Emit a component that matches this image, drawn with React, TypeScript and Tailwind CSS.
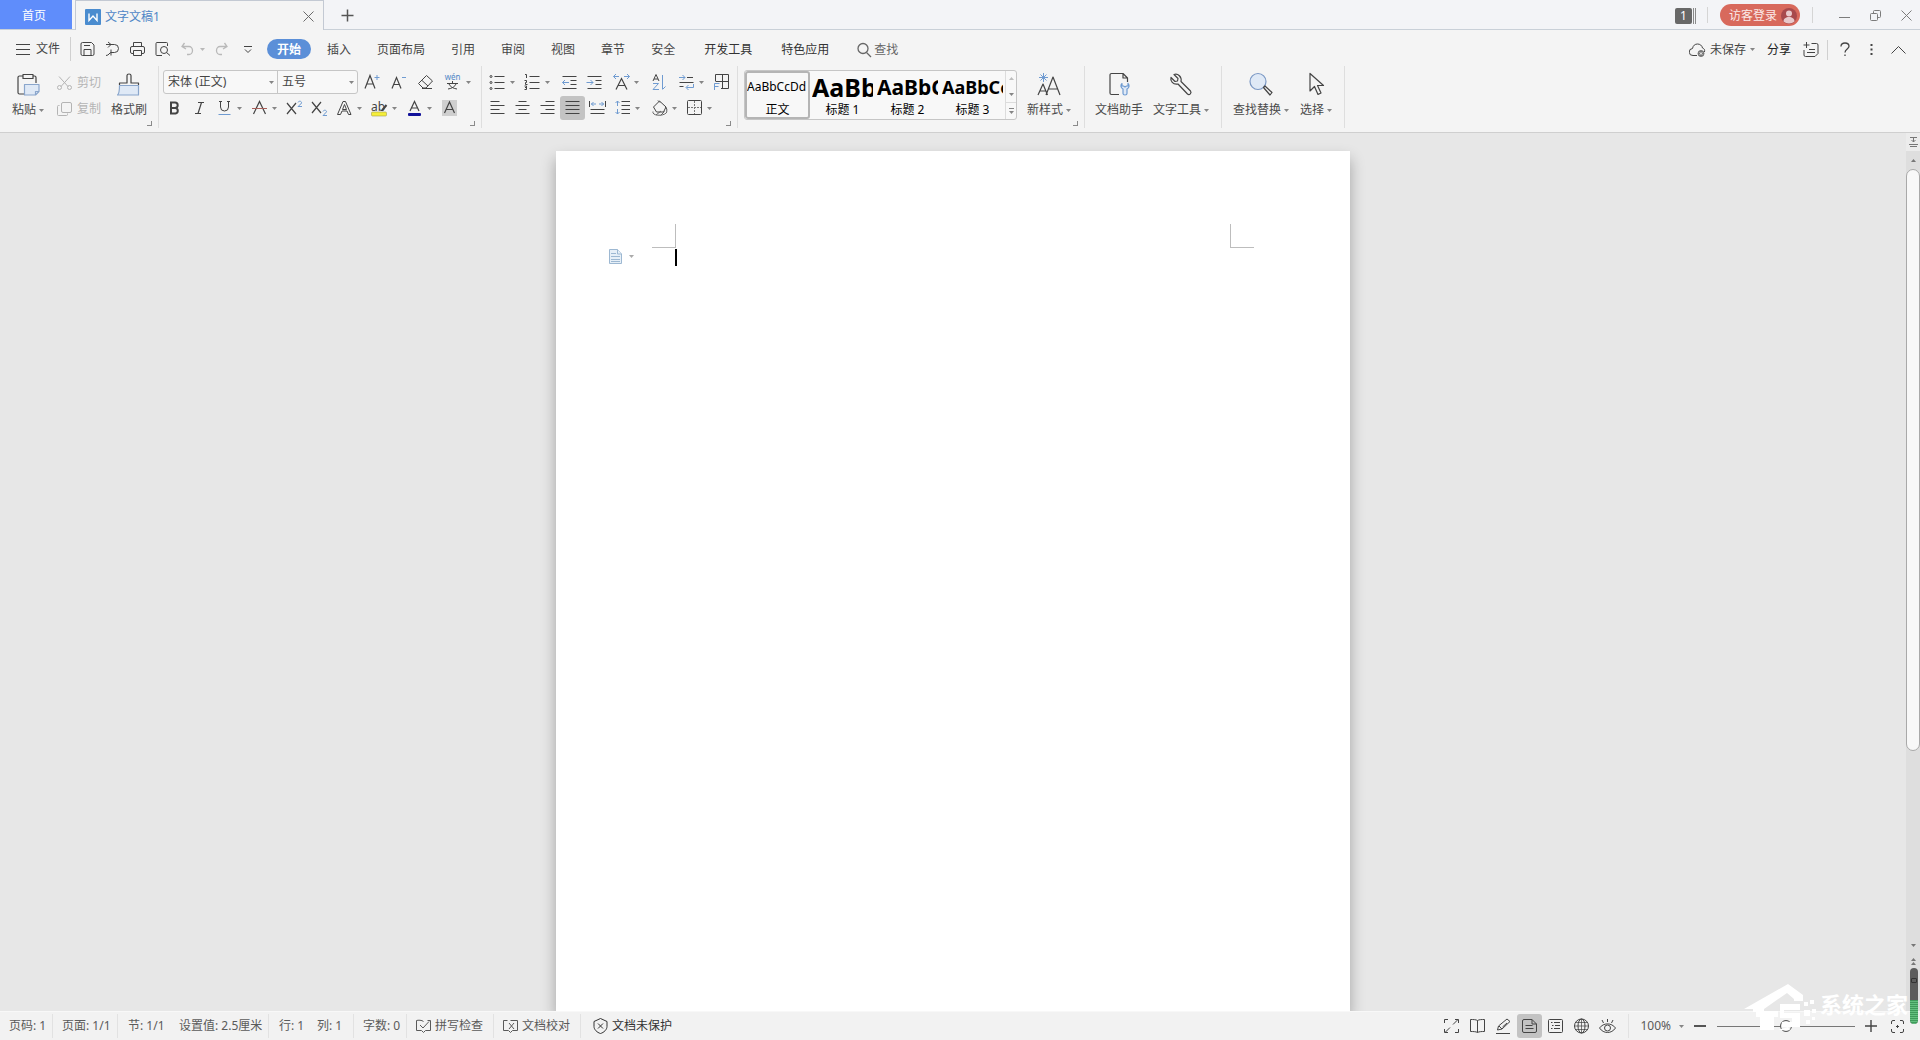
import React from 'react';
import clsx from 'clsx';

const BLUE = '#6f9bd1';

/** Small drop-down triangle */
const Caret: React.FC<{ className?: string }> = ({ className }) => (
  <svg width="5" height="3" viewBox="0 0 5 3" className={clsx('shrink-0', className ?? 'text-[#858585]')}>
    <path d="M0 0h5L2.500 3z" fill="currentColor" />
  </svg>
);

/** 17x16 line icon */
const Glyph: React.FC<{ children: React.ReactNode }> = ({ children }) => (
  <svg
    width="17"
    height="16"
    viewBox="0 0 17 16"
    fill="none"
    stroke="currentColor"
    strokeWidth="1"
    className="shrink-0 overflow-visible"
  >
    {children}
  </svg>
);

/** 24x24 line icon */
const LargeGlyph: React.FC<{ children: React.ReactNode }> = ({ children }) => (
  <svg width="24" height="24" viewBox="0 0 24 24" fill="none" stroke="#444" strokeWidth="1.2" strokeLinejoin="round">
    {children}
  </svg>
);

interface ToolButtonProps {
  label: string;
  children: React.ReactNode;
  caret?: boolean;
  active?: boolean;
  wide?: boolean;
  muted?: boolean;
}

const ToolButton: React.FC<ToolButtonProps> = ({ label, children, caret, active, wide, muted }) => (
  <button
    type="button"
    aria-label={label}
    title={label}
    className={clsx(
      'flex h-6 shrink-0 items-center',
      caret && 'pr-[5px]',
      active && 'rounded-[3px] bg-[#c3c3c3]',
      muted ? 'text-[#b9b9b9]' : 'text-[#444]'
    )}
  >
    <span className={clsx('flex justify-center', wide ? 'w-[27px]' : 'w-[25px]')}>
      <Glyph>{children}</Glyph>
    </span>
    {caret && <Caret className={muted ? 'text-[#b9b9b9]' : undefined} />}
  </button>
);

const LargeButton: React.FC<{ label: string; caret?: boolean; children: React.ReactNode }> = ({
  label,
  caret,
  children,
}) => (
  <button type="button" className="flex flex-col items-center pt-[2px] text-[#4a4a4a]">
    <LargeGlyph>{children}</LargeGlyph>
    <span className="mt-[6px] flex h-4 items-center gap-[3px] whitespace-nowrap leading-4">
      {label}
      {caret && <Caret />}
    </span>
  </button>
);

/** Ribbon group with its dialog launcher in the corner */
const Group: React.FC<{ className?: string; launcher?: boolean; children: React.ReactNode }> = ({
  className,
  launcher,
  children,
}) => (
  <section className={clsx('relative flex h-[62px] shrink-0 border-r border-[#dedede] pt-1', className)}>
    {children}
    {launcher && (
      <button
        type="button"
        aria-label="更多设置"
        className="absolute right-[6px] bottom-[2px] h-[5px] w-[5px] border-r border-b border-[#8a8a8a]"
      />
    )}
  </section>
);

const TitleBar: React.FC = () => (
  <header className="flex h-[30px] items-stretch border-b border-[#c9d0d8] bg-[#f3f4f7]">
    <button type="button" className="w-[72px] shrink-0 bg-[#5f8dfb] pt-[2px] pr-1 text-white">
      首页
    </button>
    <div className="ml-[3px] -mb-px flex w-[249px] items-center border border-b-0 border-[#c3c9d3] bg-[#f4f4f4] pt-[2px] pr-[9px] pl-[9px]">
      <svg width="16" height="16" viewBox="0 0 16 16">
        <rect width="16" height="16" rx="1" fill="#4a8ccf" />
        <path d="M4 4.500v7l4-4.500 4 4.500v-7" fill="none" stroke="#fff" strokeWidth="1.400" />
      </svg>
      <span className="ml-1 flex-1 text-[#4f86c6]">文字文稿1</span>
      <button type="button" aria-label="关闭标签" className="text-[#6b6b6b]">
        <svg width="11" height="11" viewBox="0 0 11 11" stroke="currentColor">
          <path d="M.5.5l10 10M10.500.5l-10 10" />
        </svg>
      </button>
    </div>
    <button type="button" aria-label="新建" className="ml-[17px] pt-[2px] text-[#555]">
      <svg width="13" height="13" viewBox="0 0 13 13" stroke="currentColor" strokeWidth="1.500">
        <path d="M6.500.5v12M.5 6.500h12" />
      </svg>
    </button>
    <div className="ml-auto flex items-center pt-px pr-2">
      <span className="flex items-center gap-px pt-px">
        <span className="h-4 w-[17px] rounded-[2px] bg-[#686868] text-center leading-4 text-white">1</span>
        <span className="h-4 w-[3px] border-x border-[#8a8a8a]" />
      </span>
      <span className="ml-[11px] h-4 w-px bg-[#d5d5d5]" />
      <button
        type="button"
        className="ml-3 flex h-[22px] w-20 items-center justify-between rounded-full bg-[#d8695c] pt-px pr-[3px] pl-[9px] text-[#fbeae8]"
      >
        访客登录
        <svg width="16" height="16" viewBox="0 0 16 16">
          <circle cx="8" cy="8" r="8" fill="#a8494c" />
          <circle cx="8" cy="5.500" r="3" fill="#e9c9cb" />
          <path d="M2.500 13.500c0-3 2.500-4.500 5.500-4.500s5.500 1.500 5.500 4.500c-3 2.500-8 2.500-11 0z" fill="#e9c9cb" />
        </svg>
      </button>
      <span className="ml-3 h-4 w-px bg-[#d5d5d5]" />
      <div className="ml-[26px] flex items-center gap-5 text-[#7c7c7c]">
        <button type="button" aria-label="最小化">
          <svg width="11" height="11" viewBox="0 0 11 11" fill="none" stroke="currentColor">
            <path d="M0 7.500h11" />
          </svg>
        </button>
        <button type="button" aria-label="还原">
          <svg width="11" height="11" viewBox="0 0 11 11" fill="none" stroke="currentColor">
            <rect x=".5" y="3.500" width="7" height="7" rx="1" />
            <path d="M3.500 3.500V1.500a1 1 0 011-1h5a1 1 0 011 1v5a1 1 0 01-1 1h-2" />
          </svg>
        </button>
        <button type="button" aria-label="关闭">
          <svg width="11" height="11" viewBox="0 0 11 11" stroke="currentColor">
            <path d="M.5.5l10 10M10.500.5l-10 10" />
          </svg>
        </button>
      </div>
    </div>
  </header>
);

const tabs = ['插入', '页面布局', '引用', '审阅', '视图', '章节', '安全'];
const extraTabs = ['开发工具', '特色应用'];

const MenuBar: React.FC = () => (
  <div className="flex h-[36px] items-center pt-[2px] text-[#444]">
    <button type="button" className="ml-4 flex items-center gap-[6px]">
      <svg width="14" height="11" viewBox="0 0 14 11" stroke="currentColor">
        <path d="M0 .5h14M0 5.500h14M0 10.500h14" />
      </svg>
      文件
    </button>
    <span className="ml-[10px] h-6 w-px bg-[#d0d0d0]" />
    <div className="ml-1 flex">
      <ToolButton label="保存">
        <path d="M3.500 1.500h9l2.500 2.500v9a1.500 1.500 0 01-1.500 1.500h-10A1.500 1.500 0 012 13V3a1.500 1.500 0 011.500-1.500zM5 14.500V8.500h7v6M5 4.500h6" />
      </ToolButton>
      <ToolButton label="输出">
        <path d="M2 3.500h8.500a4 4 0 010 8H7M7 8.500v6M4 1l3 2.500L4 6.500M7 11.500c-1.500 0-2 3-5 3" />
      </ToolButton>
      <ToolButton label="打印">
        <path d="M4.500 5.500v-4h8v4M4.500 12.500H3A1.500 1.500 0 011.500 11V7A1.500 1.500 0 013 5.500h11A1.500 1.500 0 0115.500 7v4a1.500 1.500 0 01-1.500 1.500h-1.500M4.500 9.500h8v5h-8z" />
      </ToolButton>
      <ToolButton label="打印预览">
        <path d="M8 14.500H3a1 1 0 01-1-1v-11a1 1 0 011-1h9.500a1 1 0 011 1V5" />
        <circle cx="10" cy="9" r="3.500" />
        <path d="M12.500 11.500l3.500 3" />
      </ToolButton>
      <ToolButton label="撤销" caret muted>
        <path d="M5.500 2L3 5.500l4 2.500M3 5.500h7a3.500 4 0 010 8H8" strokeWidth="1.300" />
      </ToolButton>
      <ToolButton label="恢复" muted>
        <path d="M10.500 2l2.500 3.500-4 2.500M13 5.500H6a3.500 4 0 000 8h2" strokeWidth="1.300" />
      </ToolButton>
      <ToolButton label="自定义快速访问工具栏">
        <path d="M5 5.500h8M6 8.500l3 3 3-3" />
      </ToolButton>
    </div>
    <nav className="flex items-center">
      <button
        type="button"
        className="mr-[3px] ml-[7px] h-5 rounded-full bg-[#5b8fd8] px-[10px] pt-px font-bold text-white"
      >
        开始
      </button>
      {tabs.map((tab) => (
        <button key={tab} type="button" className="px-[13px] pt-[2px]">
          {tab}
        </button>
      ))}
      {extraTabs.map((tab) => (
        <button key={tab} type="button" className="ml-[3px] px-[13px] pt-[2px] text-[#333]">
          {tab}
        </button>
      ))}
    </nav>
    <button type="button" className="ml-[15px] flex items-center gap-[2px] pt-px text-[#666]">
      <svg width="15" height="16" viewBox="0 0 15 16" fill="none" stroke="currentColor" strokeWidth="1.300">
        <circle cx="6" cy="6.500" r="5" />
        <path d="M9.500 10.500l4.500 4.500" />
      </svg>
      查找
    </button>
    <div className="ml-auto flex items-center pt-px pr-[14px]">
      <button type="button" className="flex items-center gap-1 whitespace-nowrap">
        <svg width="17" height="16" viewBox="0 0 17 16" fill="none" stroke="currentColor">
          <path d="M8 13.500H4a3.500 3.500 0 01-.5-7C4 3.500 6 2 8.500 2s4.500 1.500 5 4c1.500.5 2.500 1.500 2 4" />
          <circle cx="12" cy="11.500" r="3" fill="#777" stroke="#777" />
          <path d="M10.800 10.300l2.400 2.400M13.200 10.300l-2.400 2.400" stroke="#fff" />
        </svg>
        未保存
        <Caret />
      </button>
      <button type="button" className="ml-3 text-[#222]">
        分享
      </button>
      <button type="button" aria-label="批注" className="ml-3">
        <Glyph>
          <path d="M3.500 0v6M.5 3h6M8.500 1.500h5A1.500 1.500 0 0115 3v8.500l-3 3H2.500A1.500 1.500 0 011 13V8M6 7.500h6M4 10.500h8" />
        </Glyph>
      </button>
      <span className="ml-[7px] h-5 w-px bg-[#d0d0d0]" />
      <button type="button" aria-label="帮助" className="ml-3">
        <svg width="10" height="15" viewBox="0 0 10 15" fill="none" stroke="currentColor" strokeWidth="1.300">
          <path d="M1 4.500C1 2 2.500 1 5 1s4 1.200 4 3.300C9 7 5 7 5 10.500M5 12.500V14" />
        </svg>
      </button>
      <button type="button" aria-label="更多" className="ml-5">
        <svg width="3" height="13" viewBox="0 0 3 13" fill="currentColor">
          <path d="M.5 1h2v2h-2zM.5 5.500h2v2h-2zM.5 10h2v2h-2z" />
        </svg>
      </button>
      <button type="button" aria-label="折叠功能区" className="ml-[18px]">
        <svg width="15" height="8" viewBox="0 0 15 8" fill="none" stroke="currentColor">
          <path d="M.5 7.500l7-7 7 7" />
        </svg>
      </button>
    </div>
  </div>
);

const SelectBox: React.FC<{ label: string; value: string; className: string }> = ({ label, value, className }) => (
  <label className={clsx('relative flex items-center', className)}>
    <span className="sr-only">{label}</span>
    <select
      className="h-full w-full appearance-none bg-transparent pl-1 leading-5 text-[#444] outline-none"
      defaultValue={value}
    >
      <option>{value}</option>
    </select>
    <Caret className="pointer-events-none absolute right-[3px] text-[#858585]" />
  </label>
);

const FontGroup: React.FC = () => (
  <Group className="w-[323px] flex-col gap-[2px] pl-1" launcher>
    <div className="flex">
      <div className="flex h-6 w-[195px] rounded-[3px] border border-[#c6c6c6] bg-[#f8f8f8]">
        <SelectBox label="字体" value="宋体 (正文)" className="w-[114px] border-r border-[#c6c6c6]" />
        <SelectBox label="字号" value="五号" className="flex-1" />
      </div>
      <ToolButton label="增大字号" wide>
        <path d="M2 14.500l5-13 5 13M4 10h6.500" strokeWidth="1.200" />
        <path d="M14 1v5M11.500 3.500h5" stroke={BLUE} />
      </ToolButton>
      <ToolButton label="减小字号" wide>
        <path d="M2 14.500l4.500-11 4.500 11M4 10.500h5.500" strokeWidth="1.200" />
        <path d="M12 3.500h4" stroke={BLUE} />
      </ToolButton>
      <ToolButton label="清除格式" wide>
        <path d="M9.500 1.500l6 5.500-6.500 7H6L1.500 9.500zM5 6.500l6 5.500M5 14.500h10" />
      </ToolButton>
      <ToolButton label="拼音指南" wide caret>
        <text x="8.500" y="6" fontSize="8" textAnchor="middle" fill="#4f86c6" stroke="none">
          wén
        </text>
        <path d="M8.500 7v2M3 9.500h11M5 10c1 2.500 4 4.500 8 5M12 10c-1 2.500-4 4.500-8 5" />
      </ToolButton>
    </div>
    <div className="-ml-px flex">
      <ToolButton label="加粗">
        <path d="M5 2.500h4a2.700 2.700 0 010 5.400H5zM5 8h4.500a2.800 2.800 0 010 5.500H5z" strokeWidth="2" />
      </ToolButton>
      <ToolButton label="倾斜">
        <path d="M7 2.500h6M4 13.500h6M10.500 2.500l-3.500 11" strokeWidth="1.200" />
      </ToolButton>
      <ToolButton label="下划线" caret>
        <path d="M4.500 1v6a4 4 0 008 0V1M3 1.500h3M11 1.500h3" />
        <path d="M2.500 14.500h12" stroke={BLUE} />
      </ToolButton>
      <ToolButton label="删除线" caret>
        <path d="M2.500 14l6-12.500 6 12.500" strokeWidth="1.200" />
        <path d="M1 8.500h15" stroke="#a8615c" />
      </ToolButton>
      <ToolButton label="上标">
        <path d="M1 3l9 11M10 3L1 14" strokeWidth="1.200" />
        <path d="M12 2.500c.5-2 4-1.500 3.500.5C15 4.500 13 5 12 6.500h4" stroke={BLUE} />
      </ToolButton>
      <ToolButton label="下标">
        <path d="M1 2l9 11M10 2L1 13" strokeWidth="1.200" />
        <path d="M12 11.500c.5-2 4-1.500 3.500.5-.5 1-2.500 2-3.500 3.500h4" stroke={BLUE} />
      </ToolButton>
      <ToolButton label="文字效果" caret>
        <path d="M1.500 14.500l5.500-13h2.500l5.500 13h-2.500L11 11H6l-1.500 3.500zM6.500 9.500h4L8.500 4.500z" />
      </ToolButton>
      <ToolButton label="突出显示" caret>
        <text x="0" y="11" fontSize="12" fill="#444" stroke="none">
          ab
        </text>
        <path d="M15.500 5L11 10.500" strokeWidth="2" />
        <rect x=".5" y="12" width="15" height="4" rx="1" fill="#f5ee3a" stroke="#a5a04a" strokeWidth=".6" />
      </ToolButton>
      <ToolButton label="字体颜色" caret>
        <path d="M4 11l4.500-9.500L13 11M5.500 8h6" strokeWidth="1.200" />
        <rect x="2" y="13" width="13" height="3" rx="1" fill="#11119a" stroke="none" />
      </ToolButton>
      <ToolButton label="字符底纹">
        <rect x="1" y="0" width="15" height="16" fill="#cfcfcf" stroke="none" />
        <path d="M3.500 13l5-11 5 11M5.500 9.500h6" strokeWidth="1.200" />
      </ToolButton>
    </div>
  </Group>
);

const ParagraphGroup: React.FC = () => (
  <Group className="w-[256px] flex-col gap-[2px] pl-[3px]" launcher>
    <div className="flex">
      <ToolButton label="项目符号" caret>
        <path d="M5.500 2.500h10M5.500 8.500h10M5.500 14.500h10" />
        <circle cx="2" cy="2.500" r="1" />
        <circle cx="2" cy="8.500" r="1" />
        <circle cx="2" cy="14.500" r="1" />
      </ToolButton>
      <ToolButton label="编号" caret>
        <path d="M5.500 2.500h10M5.500 8.500h10M5.500 14.500h10M1 .5h1.500v3.500M.5 6.500h2v2h-1v2h2M.5 12h2v3.500h-2M1 13.500h1.500" />
      </ToolButton>
      <span className="w-[2px]" />
      <ToolButton label="减少缩进量">
        <path d="M1.500 2.500h14M9.500 6.500h6M9.500 10.500h6M1.500 14.500h14" />
        <path d="M8 8.500H1.500M4 6L1.500 8.500 4 11" stroke={BLUE} />
      </ToolButton>
      <ToolButton label="增加缩进量">
        <path d="M1.500 2.500h14M9.500 6.500h6M9.500 10.500h6M1.500 14.500h14" />
        <path d="M.5 8.500H7M4.500 6L7 8.500 4.500 11" stroke={BLUE} />
      </ToolButton>
      <span className="w-[2px]" />
      <ToolButton label="中文版式" caret>
        <path d="M3 15.500l5.500-11 5.500 11M5 11.500h7" strokeWidth="1.200" />
        <path d="M6 2.500H.5M3 0L.5 2.500 3 5M11 2.500h5.500M14 0l2.500 2.500L14 5" stroke={BLUE} />
      </ToolButton>
      <span className="w-[2px]" />
      <ToolButton label="排序">
        <path d="M3 7l3-6.500L9 7M4 5h4" />
        <path d="M3 9.500h5.500L3 15.500h6M12.500 1v14M12.500 15.500l3-3" stroke={BLUE} />
      </ToolButton>
      <span className="w-[3px]" />
      <ToolButton label="制表位" caret>
        <path d="M9 3.500h6M1.500 8.500h14M1.500 12.500h4" />
        <path d="M1 3.500h6M4.500 1L7 3.500 4.500 6M15.500 10v3.500H8.500M10.500 11L8 13.500l2.500 2.500" stroke={BLUE} />
      </ToolButton>
      <ToolButton label="插入表格">
        <path d="M2.500 7V.5h13v14H8M2.500 7.500h13M9.500.5v14" />
        <path d="M1.500 16V9.500h5M1.500 12.500h4" stroke={BLUE} />
      </ToolButton>
    </div>
    <div className="flex">
      <ToolButton label="左对齐">
        <path d="M1.500 1.500h9M1.500 5.500h14M1.500 9.500h9M1.500 13.500h14" />
      </ToolButton>
      <ToolButton label="居中对齐">
        <path d="M4.500 1.500h8M1.500 5.500h14M4.500 9.500h8M1.500 13.500h14" />
      </ToolButton>
      <ToolButton label="右对齐">
        <path d="M6.500 1.500h9M1.500 5.500h14M6.500 9.500h9M1.500 13.500h14" />
      </ToolButton>
      <ToolButton label="两端对齐" active>
        <path d="M1.500 1.500h14M1.500 5.500h14M1.500 9.500h14M1.500 13.500h14" />
      </ToolButton>
      <ToolButton label="分散对齐">
        <path d="M.5 1v6M16.500 1v6M1.500 9.500h14M1.500 13.500h14" />
        <path d="M7 4H2M4.500 2L2.500 4l2 2M10 4h5M12.500 2l2 2-2 2" stroke={BLUE} />
      </ToolButton>
      <ToolButton label="行距" caret>
        <path d="M7.500 1.500h8.500M7.500 5.500h8.500M7.500 9.500h8.500M7.500 13.500h8.500" />
        <path d="M3.500 1v5M1.500 3l2-2 2 2M3.500 9v5M1.500 12l2 2 2-2" stroke={BLUE} />
      </ToolButton>
      <span className="w-[2px]" />
      <ToolButton label="底纹颜色" caret>
        <path d="M2.500 7L8.500 1 15 7l-2.500 5h-7zM7 .5l2 2M14.500 7c1.500 1.500 1.500 3 1 4.500" />
        <path d="M2 11.500c-1.500 5 13 5 14 0M5 15l5-4M9.500 15.500l4-4" stroke="#666" />
      </ToolButton>
      <ToolButton label="边框" caret>
        <rect x="1.500" y=".5" width="14" height="14" rx="1" />
        <path d="M8.500 1v13M2 7.500h13" strokeDasharray="2 1" stroke="#777" />
      </ToolButton>
    </div>
  </Group>
);

const styles = [
  { name: '正文', sample: 'AaBbCcDd', className: 'text-xs/7' },
  { name: '标题 1', sample: 'AaBb', className: 'text-[25px]/7 font-bold' },
  { name: '标题 2', sample: 'AaBbC', className: 'text-[21px]/7 font-bold' },
  { name: '标题 3', sample: 'AaBbCc', className: 'text-lg/7 font-bold' },
];

const StyleGroup: React.FC = () => (
  <Group className="w-[347px] pl-[6px]" launcher>
    <div className="flex h-[50px] w-[273px] overflow-hidden rounded-[3px] border border-[#c6c6c6] bg-[#f8f8f8]">
      {styles.map((style, index) => (
        <button
          key={style.name}
          type="button"
          className={clsx(
            'flex w-[65px] shrink-0 flex-col items-stretch px-[2px] pt-[2px] text-left text-black',
            index === 0 && 'rounded-[3px] outline-2 -outline-offset-2 outline-[#b5b5b5]'
          )}
        >
          <span className={clsx('h-7 overflow-hidden whitespace-nowrap', style.className)}>{style.sample}</span>
          <span className="mt-px h-4 text-center leading-4">{style.name}</span>
        </button>
      ))}
      <div className="flex flex-1 flex-col border-l border-[#dcdcdc]">
        <button type="button" aria-label="上一行" className="flex flex-1 items-center justify-center">
          <Caret className="rotate-180 text-[#bdbdbd]" />
        </button>
        <button type="button" aria-label="下一行" className="flex flex-1 items-center justify-center">
          <Caret />
        </button>
        <button
          type="button"
          aria-label="其他样式"
          className="flex flex-1 flex-col items-center justify-center gap-[2px] border-t border-[#dcdcdc]"
        >
          <span className="h-px w-[5px] bg-[#858585]" />
          <Caret />
        </button>
      </div>
    </div>
    <div className="ml-[10px]">
      <LargeButton label="新样式" caret>
        <path d="M1 23L6 12l4.500 11M3 19h6M9 23l7-18 7 18M11.500 17h9" />
        <path d="M6.500 1v9M2 5.500h9M3.500 2.500l6 6M9.500 2.500l-6 6" stroke={BLUE} strokeWidth="1" />
      </LargeButton>
    </div>
  </Group>
);

const Ribbon: React.FC = () => (
  <div className="flex h-[66px]">
    <Group className="w-[159px] pl-3" launcher>
      <LargeButton label="粘贴" caret>
        <path d="M7 4H3.500A1.500 1.500 0 002 5.500v15A1.500 1.500 0 003.500 22H8M17 4h1.500A1.500 1.500 0 0120 5.500V11" />
        <path d="M7 2.500h10v4H7z" />
        <path d="M8.500 12.500h14.500v7l-3.500 3.500h-11z" fill="#dfe9f6" stroke="#8aa6cc" />
        <path d="M23 19.500h-3.500V23" stroke="#8aa6cc" />
      </LargeButton>
      <div className="ml-3 flex flex-col gap-[2px] text-[#b4b4b4]">
        <button type="button" className="flex h-6 items-center gap-1 whitespace-nowrap pt-px">
          <Glyph>
            <path d="M3 1.500l9 10M14 1.500l-9 10" />
            <circle cx="3.500" cy="12.500" r="2" />
            <circle cx="13.500" cy="12.500" r="2" />
          </Glyph>
          剪切
        </button>
        <button type="button" className="flex h-6 items-center gap-1 whitespace-nowrap pt-px">
          <Glyph>
            <rect x="5.500" y="1.500" width="10" height="10" rx="1.500" />
            <path d="M3.500 4.500h-1a1 1 0 00-1 1v8a1 1 0 001 1h8a1 1 0 001-1v-1" />
          </Glyph>
          复制
        </button>
      </div>
      <div className="ml-[10px]">
        <LargeButton label="格式刷">
          <path d="M2.500 13V11h7.500V3.500c0-2 4-2 4 0V11h7.500v2" />
          <path d="M2.500 13.500h19v9.500h-21c2-1.500 2-5 2-9.500z" fill="#dfe9f6" stroke="#8aa6cc" />
        </LargeButton>
      </div>
    </Group>
    <FontGroup />
    <ParagraphGroup />
    <StyleGroup />
    <Group className="w-[137px] justify-between pr-3 pl-[10px]">
      <LargeButton label="文档助手">
        <path d="M12 22.500H4.500A1.500 1.500 0 013 21V3a1.500 1.500 0 011.500-1.500H16L20.500 6v4M16 1.500V6h4.500" />
        <path
          d="M15 11.500c-2 2-1 4.500 1 5.500v4.500c0 2 4 2 4 0V17c2-1 3-3.500 1-5.500V14h-1.500l-1.500 1-1.500-1H15z"
          fill="#dfe9f6"
          stroke={BLUE}
        />
      </LargeButton>
      <LargeButton label="文字工具" caret>
        <path d="M5 2.500l4 4-.5 2.500L6 9.500 2 5.500C1 9 4 13 9 12l9.500 10c2 1.500 4.500-1 3-3L12 9.500C13 5 9 1 5 2.500z" />
      </LargeButton>
    </Group>
    <Group className="w-[123px] justify-between pr-3 pl-[11px]">
      <LargeButton label="查找替换" caret>
        <circle cx="9" cy="9.500" r="8" fill="#dfe9f6" stroke="#7b98c4" />
        <path d="M14.500 15.500l1.500-1.500 7 6.500-2 2.500z" />
      </LargeButton>
      <LargeButton label="选择" caret>
        <path d="M6 1.500V19l4.500-4.500L14 22.500l3-1.500-3.500-7.500H19.500z" />
      </LargeButton>
    </Group>
  </div>
);

const Workspace: React.FC = () => (
  <main className="flex min-h-0 flex-1 bg-[#e7e7e7]">
    <div className="flex min-w-0 flex-1 justify-center overflow-hidden pt-[18px]">
      <article className="w-[794px] shrink-0 bg-white shadow-[0_8px_14px_0_rgba(0,0,0,0.3)]">
        {/* Margin corners */}
        <div className="flex justify-between px-24 pt-[73px]">
          <span className="h-6 w-6 border-r border-b border-[#bdbdbd]" />
          <span className="h-6 w-6 border-b border-l border-[#bdbdbd]" />
        </div>
        <div className="flex items-start pt-px pl-[53px]">
          <button type="button" aria-label="粘贴选项" className="flex w-[66px] items-center gap-[6px]">
            <svg width="14" height="15" viewBox="0 0 14 15" fill="#e6eff7" stroke="#9db8d2">
              <path d="M.5.500h8L12.500 5v9.500H.5z" />
              <path d="M8.500.5V5h4M2 4.500h5M2 7.500h9M2 10.500h9M2 12.500h9" />
            </svg>
            <Caret className="text-[#aaa]" />
          </button>
          <span className="h-[17px] w-[2px] bg-black" />
        </div>
      </article>
    </div>
    <aside className="flex w-[14px] shrink-0 flex-col items-center bg-[#dedede] text-[#777]">
      <button type="button" aria-label="拆分窗口" className="flex h-[18px] w-full items-center justify-center bg-[#ececec]">
        <svg width="9" height="10" viewBox="0 0 9 10" fill="none" stroke="currentColor">
          <path d="M1 .5h7M4.500 5V1M2.500 3l2 2 2-2M0 7.500h9M1 9.500h7" />
        </svg>
      </button>
      <button type="button" aria-label="向上滚动" className="flex h-[18px] items-center">
        <Caret className="rotate-180 text-[#777]" />
      </button>
      <div className="flex w-full flex-1 flex-col">
        <span className="h-[76%] rounded-full border border-[#a9a9a9] bg-[#f8f8f8]" />
      </div>
      <button type="button" aria-label="向下滚动" className="flex h-5 items-center">
        <Caret className="text-[#777]" />
      </button>
      <button type="button" aria-label="上一页" className="mb-11 flex h-3 flex-col items-center justify-center gap-px">
        <Caret className="rotate-180 text-[#777]" />
        <Caret className="rotate-180 text-[#777]" />
      </button>
    </aside>
  </main>
);

const Separator: React.FC = () => <span className="h-6 w-px shrink-0 bg-[#e2e2e2]" />;

const StatusBar: React.FC = () => (
  <footer className="flex h-[29px] shrink-0 items-center border-t border-[#f8f8f8] bg-[#f2f2f2] whitespace-nowrap text-[#5a5a5a]">
    <span className="w-[52px] pl-[9px]">页码: 1</span>
    <Separator />
    <span className="w-16 pl-[9px]">页面: 1/1</span>
    <Separator />
    <span className="w-[61px] pl-[10px]">节: 1/1</span>
    <span className="w-[89px]">设置值: 2.5厘米</span>
    <Separator />
    <span className="w-12 pl-[10px]">行: 1</span>
    <span className="w-9">列: 1</span>
    <Separator />
    <span className="w-[52px] pl-[9px]">字数: 0</span>
    <Separator />
    <button type="button" className="flex w-[86px] items-center gap-[3px] pl-2">
      <Glyph>
        <path d="M8.500 3.500C7 2 3 2 1.500 2.500v10h5l2 2 2-2h5v-10h-3M5 7l3 3 6-6.500" />
      </Glyph>
      拼写检查
    </button>
    <Separator />
    <button type="button" className="flex w-[86px] items-center gap-[3px] pl-2">
      <Glyph>
        <path d="M5.500 2.500h-4v10h5l2 2 2-2h5v-10h-7M7 5l5 6M12 5l-5 6" />
      </Glyph>
      文档校对
    </button>
    <Separator />
    <button type="button" className="flex items-center gap-[3px] pl-[11px] text-[#333]">
      <Glyph>
        <path d="M8.500.5l6.500 3v5c0 3-3 6-6.500 7-3.500-1-6.500-4-6.500-7v-5zM6 5.500l5 5M11 5.500l-5 5" />
      </Glyph>
      文档未保护
    </button>

    <div className="ml-auto flex items-center">
      <div className="mr-2 flex gap-px">
        <ToolButton label="全屏显示">
          <path d="M1.500 5V1.500H5M12 1.500h3.500V5M15.500 11v3.500H12M5 14.500H1.500V11M10 6.500l4.500-4.500M7 9.500L2.500 14" />
        </ToolButton>
        <ToolButton label="阅读版式">
          <path d="M8.500 2.500C7 1.500 4 1.500 1.500 1.500v12c2.500 0 5.500 0 7 1 1.500-1 4.500-1 7-1v-12c-2.500 0-5.500 0-7 1zM8.500 2.500v12" />
        </ToolButton>
        <ToolButton label="写作模式">
          <path d="M2.500 12l1-4L12 1l3 2.500L7 11zM4 8l3 3M12 5L7.500 9M1 15.500h14" />
        </ToolButton>
        <ToolButton label="页面视图" active>
          <path d="M3 1.500h8L15.500 6v7a1.500 1.500 0 01-1.500 1.500H3A1.500 1.500 0 011.500 13V3A1.500 1.500 0 013 1.500zM11 1.500V6h4.500M4.500 7.500h7M4.500 10.500h8" />
        </ToolButton>
        <ToolButton label="大纲">
          <rect x="1.500" y="1.500" width="14" height="13" rx="1" />
          <path d="M4 4.500h1.500M7 4.500h6M5 7.500h1.500M8 7.500h5M4 10.500h1.500M7 10.500h6" />
        </ToolButton>
        <ToolButton label="Web版式">
          <circle cx="8.500" cy="8" r="7" />
          <ellipse cx="8.500" cy="8" rx="3.500" ry="7" />
          <path d="M1.500 8h14M8.500 1v14M2.500 4.500h12M2.500 11.500h12" strokeWidth=".7" />
        </ToolButton>
        <ToolButton label="护眼模式">
          <path d="M.5 10c4-5.500 12-5.500 16 0-4 6-12 6-16 0zM8.500 1v3M3 2l1.500 3M14 2l-1.500 3" />
          <circle cx="8.500" cy="10" r="3" />
        </ToolButton>
      </div>
      <Separator />
      <button type="button" className="ml-[11px] flex items-center gap-2">
        100%
        <Caret />
      </button>
      <button type="button" aria-label="缩小" className="ml-[10px] flex h-6 w-3 items-center">
        <span className="h-[2px] w-full bg-[#555]" />
      </button>
      <input
        type="range"
        aria-label="显示比例"
        min={0}
        max={200}
        defaultValue={100}
        className="ml-[11px] h-3 w-[138px] appearance-none bg-transparent [&::-webkit-slider-runnable-track]:h-px [&::-webkit-slider-runnable-track]:bg-[#777] [&::-webkit-slider-thumb]:-mt-[6px] [&::-webkit-slider-thumb]:h-3 [&::-webkit-slider-thumb]:w-3 [&::-webkit-slider-thumb]:appearance-none [&::-webkit-slider-thumb]:rounded-full [&::-webkit-slider-thumb]:border [&::-webkit-slider-thumb]:border-[#555] [&::-webkit-slider-thumb]:bg-[#f2f2f2]"
      />
      <button type="button" aria-label="放大" className="relative z-10 ml-[10px] text-[#444]">
        <svg width="12" height="12" viewBox="0 0 12 12" stroke="currentColor" strokeWidth="1.400">
          <path d="M6 0v12M0 6h12" />
        </svg>
      </button>
      <button type="button" aria-label="适合页面" className="relative z-10 mr-4 ml-[14px] text-[#444]">
        <svg width="13" height="13" viewBox="0 0 13 13" fill="none" stroke="currentColor">
          <path d="M.5 4V2a1.500 1.500 0 011.500-1.500h2M9 .5h2A1.500 1.500 0 0112.500 2v2M12.500 9v2a1.500 1.500 0 01-1.500 1.500H9M4 12.500H2A1.500 1.500 0 01.5 11V9M6.500 5v3M5 6.500h3" />
        </svg>
      </button>
    </div>
  </footer>
);

const SiteMark: React.FC = () => (
  <div className="pointer-events-none absolute right-3 bottom-2 flex items-start text-white">
    <svg width="76" height="48" viewBox="0 0 76 48" fill="#fff">
      <path d="M0 25L44 0l15 11v6h-9v-2L43 9 20 25v3H9v-3z" />
      <path d="M12 27h22v6h-4v13H16V33h-4zM36 20h20v6H40v3h16v14H38v-5h10v-4H36z" />
      <path d="M60 18h4v4h-4zM66 16h4v4h-4zM60 26h6v6h-6zM68 25h4v4h-4zM62 36h4v4h-4zM68 33h3v3h-3z" />
      <path d="M34 46l10-3 2 3z" />
    </svg>
    <span className="mt-2 text-[22px] leading-6 font-bold">系统之家</span>
  </div>
);

export default function App() {
  return (
    <div className="relative flex h-screen flex-col overflow-hidden bg-[#f4f4f4] font-['Noto_Sans','Noto_Sans_CJK_SC',sans-serif] text-xs leading-4 select-none">
      <TitleBar />
      <MenuBar />
      <div className="border-b border-[#cfcfcf]">
        <Ribbon />
      </div>
      <Workspace />
      <StatusBar />
      <SiteMark />
      {/* Floating battery meter */}
      <div className="absolute right-[2px] bottom-4 flex h-14 w-2 flex-col overflow-hidden rounded-full bg-[#5c5c5c]">
        <span className="mt-[10px] ml-px h-[5px] w-[6px] rounded-[1px] border border-[#333]" />
        <span className="mt-auto h-6 bg-[repeating-linear-gradient(#3f9a5b_0_1px,#63c07f_1px_2px)]" />
      </div>
    </div>
  );
}
